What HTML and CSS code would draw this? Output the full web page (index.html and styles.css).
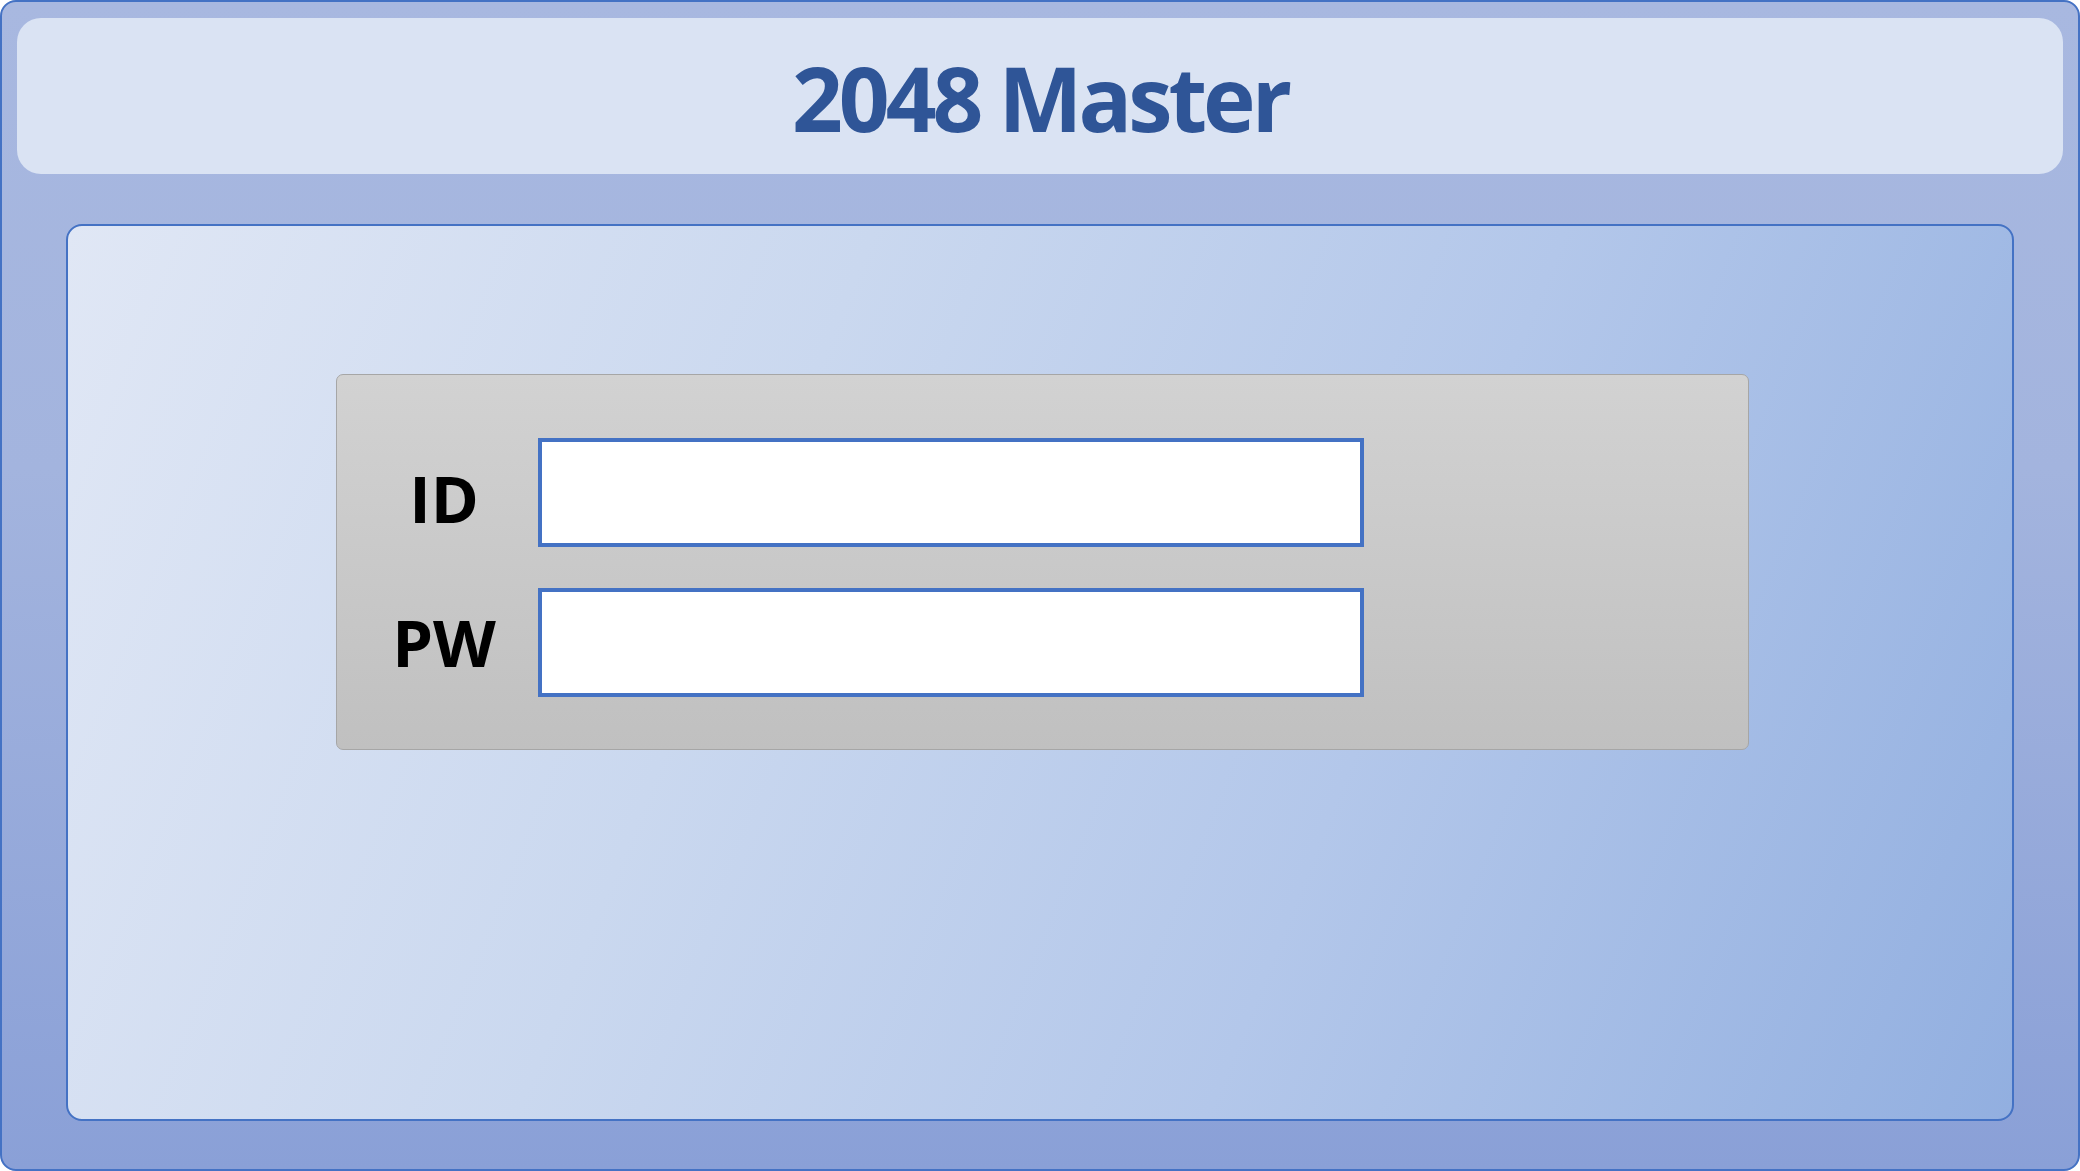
FILE: index.html
```html
<!DOCTYPE html>
<html lang="en">
<head>
<meta charset="utf-8">
<title>2048 Master</title>
<link rel="stylesheet" href="styles.css">
</head>
<body>
<div class="frame">
  <header class="header">
    <h1 class="title">2048 Master</h1>
  </header>
  <main class="panel">
    <form class="login">
      <label class="label label-id" for="uid">ID</label>
      <input class="field" id="uid" type="text">
      <label class="label label-pw" for="upw">PW</label>
      <input class="field" id="upw" type="password">
    </form>
  </main>
</div>
</body>
</html>
```

FILE: styles.css
```css
html, body {
  margin: 0;
  padding: 0;
  width: 2080px;
  height: 1171px;
  overflow: hidden;
  background: #ffffff;
}

.frame {
  box-sizing: border-box;
  width: 2080px;
  height: 1171px;
  border: 2px solid #4472c4;
  border-radius: 16px;
  padding: 16px 15px 48px;
  background: linear-gradient(180deg, #a8b8e0 0%, #a3b4de 40%, #8aa0d7 100%);
  display: flex;
  flex-direction: column;
}

.header {
  height: 156px;
  flex: none;
  border-radius: 24px;
  background: #dae3f3;
  display: flex;
  align-items: center;
  justify-content: center;
}

.title {
  margin: 2px 0 0 0;
  font-family: "Open Sans", "Noto Sans", sans-serif;
  font-weight: 700;
  font-size: 89px;
  letter-spacing: -4px;
  color: #2f5597;
  line-height: 1;
}

.panel {
  flex: 1;
  margin: 50px 49px 0;
  border: 2px solid #4472c4;
  border-radius: 16px;
  background: linear-gradient(112deg, #e0e7f5 0%, #cad8ef 35%, #b3c7ea 65%, #92afe0 100%);
  padding: 148px 0 0 268px;
}

.login {
  box-sizing: border-box;
  width: 1413px;
  height: 376px;
  border: 1px solid #a6a6a6;
  border-radius: 7px;
  background: linear-gradient(180deg, #d2d2d2 0%, #c0c0c0 100%);
  padding: 63px 0 0 43px;
  display: grid;
  grid-template-columns: 128px 826px;
  grid-template-rows: 109px 109px;
  column-gap: 30px;
  row-gap: 41px;
  align-items: center;
}

.label {
  font-family: "Open Sans", "Noto Sans", sans-serif;
  font-weight: 700;
  font-size: 65px;
  line-height: 1;
  color: #000000;
  text-align: center;
}

.label-id {
  padding-top: 12px;
}

.field {
  box-sizing: border-box;
  width: 826px;
  height: 109px;
  margin: 0;
  border: 4px solid #4472c4;
  border-radius: 0;
  background: #ffffff;
  outline: none;
  padding: 0 16px;
  font-size: 40px;
}
```
